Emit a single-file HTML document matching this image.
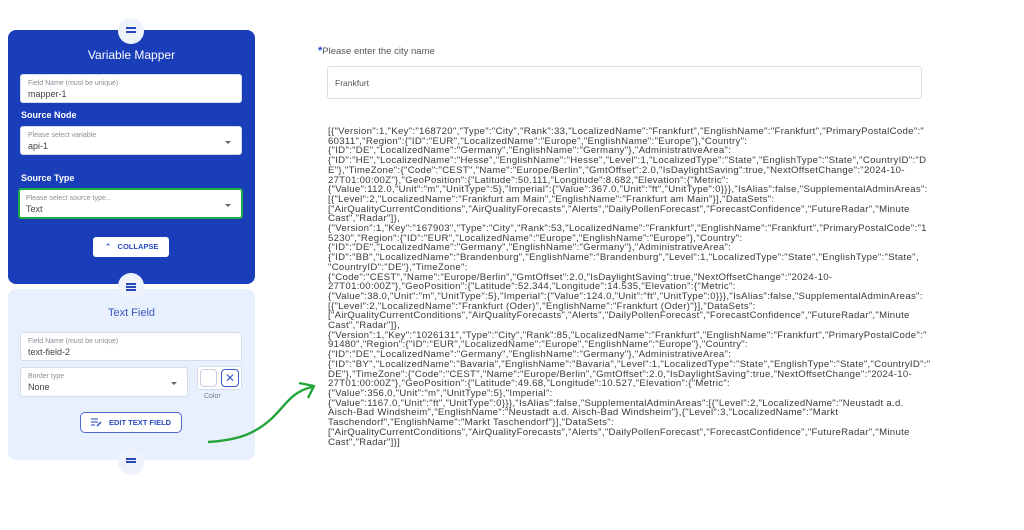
<!DOCTYPE html>
<html><head><meta charset="utf-8"><style>
*{box-sizing:border-box;margin:0;padding:0}
body{width:1024px;height:530px;background:#fff;font-family:"Liberation Sans",sans-serif;position:relative;overflow:hidden}
.abs{position:absolute}
.card1{left:8px;top:30px;width:247px;height:254px;background:#1a3eb9;border-radius:8px}
.card2{left:8px;top:289px;width:247px;height:171px;background:#e9f0fd;border-radius:8px}
.handle{width:26px;height:26px;border-radius:50%;background:#eef2fb;}
.handle i{position:absolute;left:8px;width:10px;height:1.6px;background:#2747b8}
.inp{background:#fff;border-radius:3px;border:1px solid #d5dbe8}
.lab{font-size:7px;color:#8a8f99;position:absolute;left:7px;top:5px}
.val{font-size:9px;color:#444;position:absolute;left:7px;top:14px}
.caret{position:absolute;right:10px;top:14px;width:0;height:0;border-left:3px solid transparent;border-right:3px solid transparent;border-top:3px solid #666}
.h{color:#fff;font-weight:bold;font-size:9px}
.json{left:328px;top:127px;font-size:9.6px;line-height:9.7px;color:#3a3a3a;white-space:nowrap;letter-spacing:0.3px}
</style></head><body>
<div class="abs card1"></div>
<div class="abs card2"></div>
<div class="abs handle" style="left:118px;top:18px"><i style="top:9px"></i><i style="top:13px"></i></div>
<div class="abs handle" style="left:118px;top:273px"><i style="top:10px"></i><i style="top:13px"></i><i style="top:16px"></i></div>
<div class="abs handle" style="left:118px;top:449px"><i style="top:9px"></i><i style="top:12px"></i></div>
<div class="abs" style="left:8px;top:48px;width:247px;text-align:center;color:#fff;font-size:12px">Variable Mapper</div>
<div class="abs inp" style="left:20px;top:74px;width:222px;height:29px"><span class="lab">Field Name (must be unique)</span><span class="val">mapper-1</span></div>
<div class="abs h" style="left:21px;top:110px">Source Node</div>
<div class="abs inp" style="left:20px;top:126px;width:222px;height:29px"><span class="lab">Please select variable</span><span class="val">api-1</span><span class="caret"></span></div>
<div class="abs h" style="left:21px;top:173px">Source Type</div>
<div class="abs inp" style="left:18px;top:188px;width:225px;height:31px;border:2.5px solid #1fab45"><span class="lab" style="left:6px">Please select source type...</span><span class="val" style="left:6px">Text</span><span class="caret"></span></div>
<div class="abs" style="left:93px;top:237px;width:76px;height:20px;background:#fff;border-radius:3px;font-size:7.5px;font-weight:bold;color:#2b4cc0;line-height:20px;padding-left:12px">&#8963;&nbsp;&nbsp;&nbsp;COLLAPSE</div>
<div class="abs" style="left:8px;top:307px;width:247px;text-align:center;color:#3a55c4;font-size:11px">Text Field</div>
<div class="abs inp" style="left:20px;top:332px;width:222px;height:29px"><span class="lab">Field Name (must be unique)</span><span class="val">text-field-2</span></div>
<div class="abs inp" style="left:20px;top:367px;width:168px;height:30px"><span class="lab">Border type</span><span class="val">None</span><span class="caret"></span></div>
<div class="abs inp" style="left:197px;top:366px;width:45px;height:24px"></div>
<div class="abs" style="left:200px;top:369px;width:17px;height:18px;border:1px solid #ccd;border-radius:4px;background:#fff"></div>
<div class="abs" style="left:221px;top:369px;width:18px;height:18px;border:1.2px solid #3a5ac8;border-radius:4px;color:#3a5ac8;font-size:12px;text-align:center;line-height:16px">✕</div>
<div class="abs" style="left:204px;top:393px;font-size:7px;color:#777">Color</div>
<div class="abs" style="left:80px;top:412px;width:102px;height:21px;background:#fff;border:1px solid #4a68cc;border-radius:5px;font-size:7.5px;font-weight:bold;color:#2b4cc0;line-height:19px;padding-left:28px">EDIT TEXT FIELD</div>
<svg class="abs" style="left:90px;top:417px" width="12" height="10"><path d="M1 2h7M1 5h7M1 8h4" stroke="#4a68cc" stroke-width="1.3"/><path d="M7 9l4-4" stroke="#4a68cc" stroke-width="1.8"/></svg>
<svg class="abs" style="left:200px;top:375px" width="125" height="75"><path d="M8 67C40 65 55 58 70 45S90 17 112 12" fill="none" stroke="#22a43a" stroke-width="2.4"/><path d="M99 8L114 11L108 23" fill="none" stroke="#22a43a" stroke-width="2.4" stroke-linejoin="round"/></svg>
<div class="abs" style="left:318px;top:45px;font-size:9.5px;color:#555"><span style="color:#1e3fc0;font-weight:bold;font-size:11px">*</span>Please enter the city name</div>
<div class="abs" style="left:327px;top:66px;width:595px;height:33px;border:1px solid #ddd;border-radius:3px;font-size:8.5px;color:#555;padding:11px 0 0 7px">Frankfurt</div>
<div class="abs json">
[{"Version":1,"Key":"168720","Type":"City","Rank":33,"LocalizedName":"Frankfurt","EnglishName":"Frankfurt","PrimaryPostalCode":"<br>
60311","Region":{"ID":"EUR","LocalizedName":"Europe","EnglishName":"Europe"},"Country":<br>
{"ID":"DE","LocalizedName":"Germany","EnglishName":"Germany"},"AdministrativeArea":<br>
{"ID":"HE","LocalizedName":"Hesse","EnglishName":"Hesse","Level":1,"LocalizedType":"State","EnglishType":"State","CountryID":"D<br>
E"},"TimeZone":{"Code":"CEST","Name":"Europe/Berlin","GmtOffset":2.0,"IsDaylightSaving":true,"NextOffsetChange":"2024-10-<br>
27T01:00:00Z"},"GeoPosition":{"Latitude":50.111,"Longitude":8.682,"Elevation":{"Metric":<br>
{"Value":112.0,"Unit":"m","UnitType":5},"Imperial":{"Value":367.0,"Unit":"ft","UnitType":0}}},"IsAlias":false,"SupplementalAdminAreas":<br>
[{"Level":2,"LocalizedName":"Frankfurt am Main","EnglishName":"Frankfurt am Main"}],"DataSets":<br>
["AirQualityCurrentConditions","AirQualityForecasts","Alerts","DailyPollenForecast","ForecastConfidence","FutureRadar","Minute<br>
Cast","Radar"]},<br>
{"Version":1,"Key":"167903","Type":"City","Rank":53,"LocalizedName":"Frankfurt","EnglishName":"Frankfurt","PrimaryPostalCode":"1<br>
5230","Region":{"ID":"EUR","LocalizedName":"Europe","EnglishName":"Europe"},"Country":<br>
{"ID":"DE","LocalizedName":"Germany","EnglishName":"Germany"},"AdministrativeArea":<br>
{"ID":"BB","LocalizedName":"Brandenburg","EnglishName":"Brandenburg","Level":1,"LocalizedType":"State","EnglishType":"State",<br>
"CountryID":"DE"},"TimeZone":<br>
{"Code":"CEST","Name":"Europe/Berlin","GmtOffset":2.0,"IsDaylightSaving":true,"NextOffsetChange":"2024-10-<br>
27T01:00:00Z"},"GeoPosition":{"Latitude":52.344,"Longitude":14.535,"Elevation":{"Metric":<br>
{"Value":38.0,"Unit":"m","UnitType":5},"Imperial":{"Value":124.0,"Unit":"ft","UnitType":0}}},"IsAlias":false,"SupplementalAdminAreas":<br>
[{"Level":2,"LocalizedName":"Frankfurt (Oder)","EnglishName":"Frankfurt (Oder)"}],"DataSets":<br>
["AirQualityCurrentConditions","AirQualityForecasts","Alerts","DailyPollenForecast","ForecastConfidence","FutureRadar","Minute<br>
Cast","Radar"]},<br>
{"Version":1,"Key":"1026131","Type":"City","Rank":85,"LocalizedName":"Frankfurt","EnglishName":"Frankfurt","PrimaryPostalCode":"<br>
91480","Region":{"ID":"EUR","LocalizedName":"Europe","EnglishName":"Europe"},"Country":<br>
{"ID":"DE","LocalizedName":"Germany","EnglishName":"Germany"},"AdministrativeArea":<br>
{"ID":"BY","LocalizedName":"Bavaria","EnglishName":"Bavaria","Level":1,"LocalizedType":"State","EnglishType":"State","CountryID":"<br>
DE"},"TimeZone":{"Code":"CEST","Name":"Europe/Berlin","GmtOffset":2.0,"IsDaylightSaving":true,"NextOffsetChange":"2024-10-<br>
27T01:00:00Z"},"GeoPosition":{"Latitude":49.68,"Longitude":10.527,"Elevation":{"Metric":<br>
{"Value":356.0,"Unit":"m","UnitType":5},"Imperial":<br>
{"Value":1167.0,"Unit":"ft","UnitType":0}}},"IsAlias":false,"SupplementalAdminAreas":[{"Level":2,"LocalizedName":"Neustadt a.d.<br>
Aisch-Bad Windsheim","EnglishName":"Neustadt a.d. Aisch-Bad Windsheim"},{"Level":3,"LocalizedName":"Markt<br>
Taschendorf","EnglishName":"Markt Taschendorf"}],"DataSets":<br>
["AirQualityCurrentConditions","AirQualityForecasts","Alerts","DailyPollenForecast","ForecastConfidence","FutureRadar","Minute<br>
Cast","Radar"]}]
</div>
</body></html>
